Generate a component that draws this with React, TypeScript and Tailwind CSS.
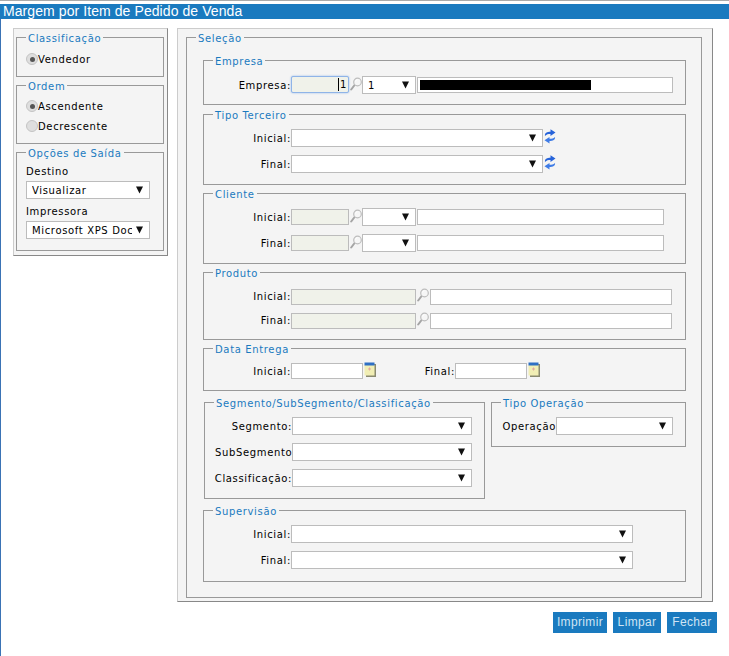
import type { ReactNode } from 'react';

const font = "font-['DejaVu_Sans','Liberation_Sans',sans-serif]";

function Arrow() {
  return (
    <svg width="7" height="8" viewBox="0 0 7 8" className="shrink-0">
      <path d="M0 0.5H7L5 4.5L3.5 7.5L2 4.5Z" fill="#111" />
    </svg>
  );
}

function Lens() {
  return (
    <svg width="12" height="14" viewBox="0 0 12 14" className="mb-[3px] shrink-0">
      <path d="M1.2 12.5L5 7.5" stroke="#a5a5a5" strokeWidth="2" strokeLinecap="round" />
      <circle cx="7.5" cy="5" r="3.8" fill="#f6f6f6" stroke="#bdbdbd" strokeWidth="1.2" />
      <path d="M5.5 4.5A2.3 2.3 0 0 1 7.5 2.7" stroke="#fff" fill="none" />
    </svg>
  );
}

function Refresh() {
  return (
    <svg width="12" height="15" viewBox="0 0 12 15" className="mb-[4px] shrink-0">
      <path d="M1 7C0.5 4 3 2.7 6.5 2.7V0.3L11.5 3.6L6.5 6.9V5C4.2 5 2.6 5.3 1 7Z" fill="#2663d9" />
      <path d="M11 8C11.5 10.6 9 12 5.5 12V14.6L0.5 11.3L5.5 8V9.8C7.8 9.8 9.4 9.5 11 8Z" fill="#3f7ce6" />
    </svg>
  );
}

function Calendar() {
  return (
    <svg width="12" height="15" viewBox="0 0 12 15" className="mb-[4px] shrink-0">
      <rect x="2" y="2" width="10" height="13" fill="#8a8a70" />
      <rect x="0.5" y="3" width="10" height="10.5" fill="#f1eeb4" />
      <rect x="0.5" y="0.5" width="10" height="3" fill="#2f6fc4" />
      <rect x="4" y="6.5" width="3" height="1" fill="#e3a8a0" />
      <rect x="5" y="5.5" width="1" height="3" fill="#e3a8a0" />
    </svg>
  );
}

function Select({ value = '', className = '' }: { value?: string; className?: string }) {
  return (
    <div className={`flex h-[18px] shrink-0 items-center justify-between overflow-hidden border border-[#bcbcbc] bg-white pl-[5px] pr-[6px] ${className}`}>
      <span className="overflow-hidden whitespace-nowrap">{value}</span>
      <Arrow />
    </div>
  );
}

function Input({ className = '' }: { className?: string }) {
  return <div className={`h-[16px] shrink-0 border border-[#bcbcbc] bg-white ${className}`} />;
}

function Locked({ className = '' }: { className?: string }) {
  return <div className={`h-[16px] shrink-0 border border-[#bcbcbc] bg-[#f0f2ea] ${className}`} />;
}

function Group({ title, className = '', children }: { title: string; className?: string; children: ReactNode }) {
  return (
    <fieldset className={`min-w-0 border border-[#999] ${className}`}>
      <legend className="ml-[9px] h-[13px] px-[2px] text-[10px] leading-[15px] tracking-[0.65px] text-[#1a7abf]">{title}</legend>
      {children}
    </fieldset>
  );
}

function Row({ label, children, labelClass = 'w-[87px]', className = 'h-[18px]' }: { label: string; children: ReactNode; labelClass?: string; className?: string }) {
  return (
    <div className={`flex items-center ${className}`}>
      <span className={`shrink-0 whitespace-nowrap text-right ${labelClass}`}>{label}</span>
      {children}
    </div>
  );
}

function Radio({ label, checked = false }: { label: string; checked?: boolean }) {
  return (
    <div className="flex h-[14px] items-center">
      <span className="flex size-[12px] items-center justify-center rounded-full border border-[#c4c4c4] bg-[#dedede]">
        {checked && <span className="size-[5px] rounded-full bg-[#555]" />}
      </span>
      <span>{label}</span>
    </div>
  );
}

function Button({ children, className = '' }: { children: ReactNode; className?: string }) {
  return (
    <button className={`h-[21px] bg-[#1a7abf] font-['Liberation_Sans',sans-serif] text-[12px] tracking-[0.35px] text-[#cfe4f4] ${className}`}>
      {children}
    </button>
  );
}

export default function App() {
  return (
    <div className={`h-[656px] w-[729px] overflow-hidden bg-white text-[10px] leading-[13px] tracking-[0.65px] text-black ${font}`}>
      <div className="h-[4px] border-t border-[#aaa] bg-white" />
      <div className="flex h-[15px] items-center bg-[#1a7abf] pl-[3px] font-['Liberation_Sans',sans-serif] text-[14px] tracking-[0.08px] text-white">
        Margem por Item de Pedido de Venda
      </div>
      <div className="h-[637px] border-l border-[#3a73b5] pl-[12px] pt-[9px]">
        <div className="flex items-start">
          {/* coluna esquerda */}
          <div className="h-[228px] w-[155px] border border-b-[#888] border-l-[#ccc] border-r-[#888] border-t-[#ccc] bg-[#f4f4f4] pl-[2px] pt-[2px]">
            <Group title="Classificação" className="h-[46px] w-[148px]">
              <div className="pl-[9px] pt-[8px]">
                <Radio label="Vendedor" checked />
              </div>
            </Group>
            <Group title="Ordem" className="mt-[2px] h-[65px] w-[148px]">
              <div className="flex flex-col gap-[6px] pl-[9px] pt-[7px]">
                <Radio label="Ascendente" checked />
                <Radio label="Decrescente" />
              </div>
            </Group>
            <Group title="Opções de Saída" className="mt-[2px] h-[105px] w-[148px]">
              <div className="pl-[9px] pt-[6px]">
                <div>Destino</div>
                <Select value="Visualizar" className="mt-[3px] w-[124px]" />
                <div className="mt-[6px]">Impressora</div>
                <Select value="Microsoft XPS Document Writer" className="mt-[3px] w-[124px] [&>span]:w-[100px]" />
              </div>
            </Group>
          </div>

          {/* coluna direita */}
          <div className="ml-[9px] w-[536px]">
            <div className="h-[574px] border border-b-[#888] border-l-[#ccc] border-r-[#888] border-t-[#ccc] bg-[#f4f4f4] pl-[8px] pt-[2px]">
              <Group title="Seleção" className="h-[567px] w-[516px]">
                <div className="pl-[16px] pt-[10px]">
                  <Group title="Empresa" className="h-[51px] w-[483px]">
                    <Row label="Empresa:" className="mt-[9px] h-[18px]">
                      <div className="mb-[1px] flex h-[17px] w-[58px] shrink-0 items-center justify-end rounded-[2px] border border-[#8fb4e8] bg-[#f0f2ea] pr-[1px] shadow-[0_0_2px_#8fb4e8]">
                        <span className="border-l border-black pl-[1px] leading-[13px]">1</span>
                      </div>
                      <span className="ml-[1px]"><Lens /></span>
                      <Select value="1" className="w-[54px]" />
                      <div className="mb-[1px] ml-[1px] flex h-[16px] w-[256px] items-center border border-[#bcbcbc] bg-white pl-[2px]">
                        <div className="h-[10px] w-[171px] bg-black" />
                      </div>
                    </Row>
                  </Group>
                  <Group title="Tipo Terceiro" className="mt-[3px] h-[77px] w-[483px]">
                    <div className="flex flex-col gap-[8px] pt-[8px]">
                      <Row label="Inicial:"><Select className="w-[252px]" /><span className="ml-[1px]"><Refresh /></span></Row>
                      <Row label="Final:"><Select className="w-[252px]" /><span className="ml-[1px]"><Refresh /></span></Row>
                    </div>
                  </Group>
                  <Group title="Cliente" className="mt-[2px] h-[77px] w-[483px]">
                    <div className="flex flex-col gap-[8px] pt-[8px]">
                      {['Inicial:', 'Final:'].map(label => (
                        <Row key={label} label={label}>
                          <Locked className="w-[58px]" />
                          <span className="ml-[1px]"><Lens /></span>
                          <Select className="w-[54px]" />
                          <Input className="ml-[1px] w-[247px]" />
                        </Row>
                      ))}
                    </div>
                  </Group>
                  <Group title="Produto" className="mt-[2px] h-[74px] w-[483px]">
                    <div className="flex flex-col gap-[7px] pt-[9px]">
                      {['Inicial:', 'Final:'].map(label => (
                        <Row key={label} label={label} className="h-[17px]">
                          <Locked className="w-[125px]" />
                          <span className="ml-[1px] mr-[1px]"><Lens /></span>
                          <Input className="w-[242px]" />
                        </Row>
                      ))}
                    </div>
                  </Group>
                  <Group title="Data Entrega" className="mt-[2px] h-[49px] w-[483px]">
                    <Row label="Inicial:" className="mt-[8px] h-[16px]">
                      <Input className="w-[72px]" />
                      <span className="ml-[1px]"><Calendar /></span>
                      <span className="w-[79px] shrink-0 whitespace-nowrap text-right">Final:</span>
                      <Input className="w-[72px]" />
                      <span className="ml-[1px]"><Calendar /></span>
                    </Row>
                  </Group>
                  <div className="mt-[5px] flex items-start">
                    <Group title="Segmento/SubSegmento/Classificação" className="ml-[1px] h-[103px] w-[281px]">
                      <div className="flex flex-col gap-[8px] pt-[8px]">
                        <Row label="Segmento:" labelClass="w-[87px]"><Select className="w-[180px]" /></Row>
                        <Row label="SubSegmento" labelClass="w-[87px] overflow-hidden !text-left pl-[10px]"><Select className="w-[180px]" /></Row>
                        <Row label="Classificação:" labelClass="w-[87px]"><Select className="w-[180px]" /></Row>
                      </div>
                    </Group>
                    <Group title="Tipo Operação" className="ml-[6px] h-[51px] w-[195px]">
                      <Row label="Operação" labelClass="w-[64px]" className="mt-[8px] h-[18px]">
                        <Select className="w-[117px]" />
                      </Row>
                    </Group>
                  </div>
                  <Group title="Supervisão" className="mt-[5px] h-[78px] w-[483px]">
                    <div className="flex flex-col gap-[8px] pt-[8px]">
                      <Row label="Inicial:"><Select className="w-[342px]" /></Row>
                      <Row label="Final:"><Select className="w-[342px]" /></Row>
                    </div>
                  </Group>
                </div>
              </Group>
            </div>
            <div className="mt-[10px] flex justify-end gap-[6px]">
              <Button className="ml-auto w-[54px]">Imprimir</Button>
              <Button className="w-[48px]">Limpar</Button>
              <Button className="mr-[-4px] w-[50px]">Fechar</Button>
            </div>
          </div>
        </div>
      </div>
    </div>
  );
}
